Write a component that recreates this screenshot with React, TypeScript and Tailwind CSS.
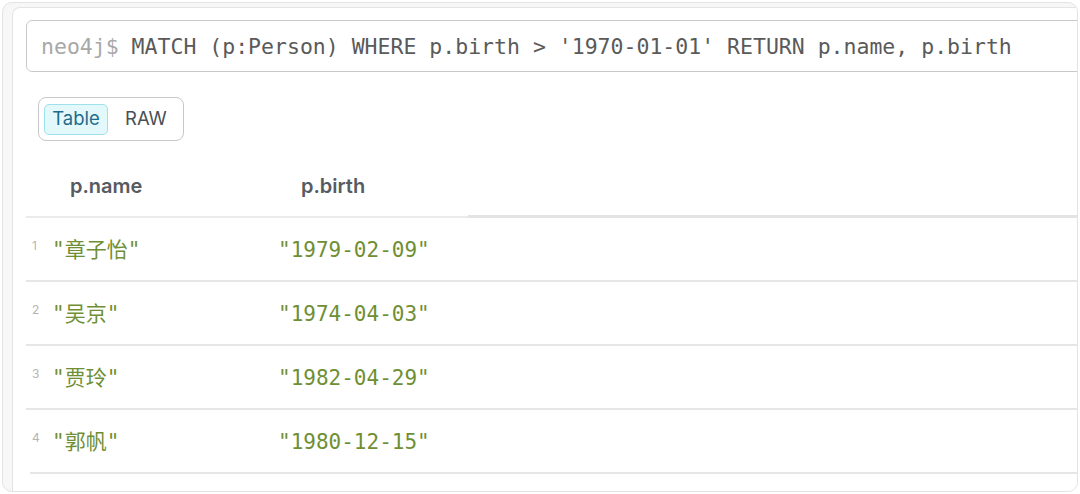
import React from "react";

const rows = [
  { n: 1, name: "章子怡", birth: "1979-02-09" },
  { n: 2, name: "吴京", birth: "1974-04-03" },
  { n: 3, name: "贾玲", birth: "1982-04-29" },
  { n: 4, name: "郭帆", birth: "1980-12-15" },
];

const mono = "font-['DejaVu_Sans_Mono','Noto_Sans_CJK_SC',monospace]";

export default function App() {
  return (
    <div className="w-[1080px] h-[494px] bg-white p-[2px] font-['Inter',sans-serif]">
      <div className="h-full rounded-[10px] border border-[#e3e3e3] bg-[#f7f7f7] pl-[9px] pt-[4px] overflow-hidden">
        <div className="h-full w-[1100px] bg-white border-l border-t border-[#e4e4e4] rounded-tl-[8px] pl-[13px] pt-[12px]">
          {/* query bar */}
          <div
            className={`h-[52px] w-[1080px] rounded-[6px] border border-[#c9c9cd] flex items-center pl-[14px] pt-[3px] text-[21.5px] whitespace-nowrap ${mono}`}
          >
            <span className="text-[#a8a8a8]">neo4j$</span>
            <span className="text-[#5a5a5a]">&nbsp;MATCH (p:Person) WHERE p.birth &gt; '1970-01-01' RETURN p.name, p.birth</span>
          </div>

          {/* view toggle */}
          <div className="mt-[25px] ml-[12px] w-[146px] h-[44px] rounded-[8px] border border-[#c8c8cc] flex items-center px-[5px] gap-[17px]">
            <div className="h-[31px] w-[64px] rounded-[5px] bg-[#e2f8fb] border border-[#9fe1ea] flex items-center justify-center text-[18.5px] text-[#1f6b8c]">
              Table
            </div>
            <div className="text-[18.5px] text-[#4a4f55]">RAW</div>
          </div>

          {/* table */}
          <div className="w-[1060px]">
            <div className="h-[74px] flex items-center pt-[15px] text-[20px] font-semibold text-[#565b62]">
              <div className="w-[275px] pl-[44px]">p.name</div>
              <div>p.birth</div>
            </div>
            <div className="h-[3px] flex items-end">
              <div className="w-[442px] h-[2px] bg-[#ebebeb]" />
              <div className="flex-1 h-[3px] bg-[#e3e3e3]" />
            </div>
            {rows.map((r, i) => (
              <div key={r.n} className="h-[64px] flex flex-col">
                <div className="flex-1 flex items-center pt-[3px]">
                  <div className="w-[26px] pl-[6px] self-start pt-[16px] text-[12px] text-[#b4b4b4]">{r.n}</div>
                  <div className={`w-[226px] text-[21px] text-[#6f8f35] ${mono}`}>"{r.name}"</div>
                  <div className={`text-[21px] text-[#6f8f35] ${mono}`}>"{r.birth}"</div>
                </div>
                <div className={i === rows.length - 1 ? "h-[2px] ml-[4px] bg-[#e6e6e6]" : "h-[2px] bg-[#e6e6e6]"} />
              </div>
            ))}
          </div>
        </div>
      </div>
    </div>
  );
}
